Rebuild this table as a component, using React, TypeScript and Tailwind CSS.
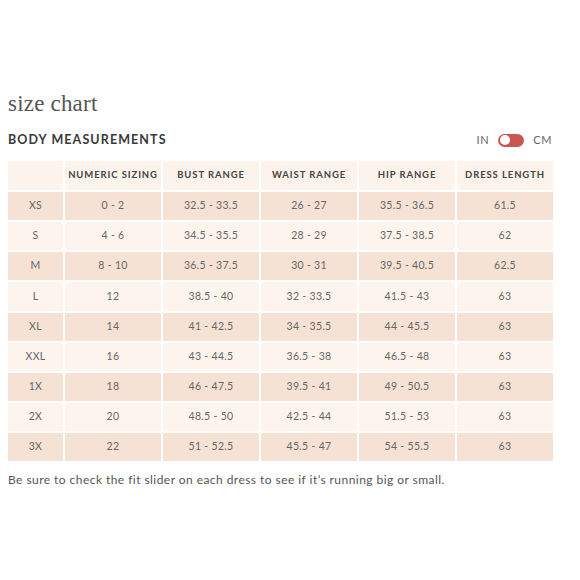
const headers = ['', 'NUMERIC SIZING', 'BUST RANGE', 'WAIST RANGE', 'HIP RANGE', 'DRESS LENGTH'];

const rows = [
  ['XS', '0 - 2', '32.5 - 33.5', '26 - 27', '35.5 - 36.5', '61.5'],
  ['S', '4 - 6', '34.5 - 35.5', '28 - 29', '37.5 - 38.5', '62'],
  ['M', '8 - 10', '36.5 - 37.5', '30 - 31', '39.5 - 40.5', '62.5'],
  ['L', '12', '38.5 - 40', '32 - 33.5', '41.5 - 43', '63'],
  ['XL', '14', '41 - 42.5', '34 - 35.5', '44 - 45.5', '63'],
  ['XXL', '16', '43 - 44.5', '36.5 - 38', '46.5 - 48', '63'],
  ['1X', '18', '46 - 47.5', '39.5 - 41', '49 - 50.5', '63'],
  ['2X', '20', '48.5 - 50', '42.5 - 44', '51.5 - 53', '63'],
  ['3X', '22', '51 - 52.5', '45.5 - 47', '54 - 55.5', '63'],
];

export default function App() {
  return (
    <div className="w-[580px] h-[580px] bg-white px-2 pt-[90px] font-['Lato',sans-serif] text-[#555]">
      <h1 className="font-['Liberation_Serif',serif] text-[23px] leading-[28px] text-[#555] tracking-[0.2px]">
        size chart
      </h1>

      {/* section header + unit toggle */}
      <div className="mt-[13px] flex w-[544px] items-center justify-between">
        <h2 className="text-[12.5px] font-bold tracking-[1.1px] text-[#3a3a3a]">BODY MEASUREMENTS</h2>
        <div className="flex items-center gap-[9px] text-[11px] tracking-[0.6px] text-[#666]">
          <span>IN</span>
          <div className="flex h-[13px] w-[26px] items-center rounded-full bg-[#c9574f] px-[2px]">
            <div className="h-[10px] w-[10px] rounded-full bg-white" />
          </div>
          <span>CM</span>
        </div>
      </div>

      <div className="mt-[11px] grid w-[545px] grid-cols-[55px_repeat(5,96px)] gap-[2px]">
        {headers.map((h, i) => (
          <div
            key={i}
            className="flex h-[29px] items-center justify-center bg-[#fcf3ec] text-[9.5px] font-bold tracking-[0.9px] text-[#444]"
          >
            {h}
          </div>
        ))}
        {rows.map((row, r) =>
          row.map((cell, c) => (
            <div
              key={r + '-' + c}
              className={`flex h-[28.2px] items-center justify-center text-[10.5px] tracking-[0.3px] text-[#666] ${
                r % 2 === 0 ? 'bg-[#f6e2d4]' : 'bg-[#fdf4ee]'
              }`}
            >
              {cell}
            </div>
          ))
        )}
      </div>

      <p className="mt-[10px] text-[12px] tracking-[0.45px] text-[#555]">
        Be sure to check the fit slider on each dress to see if it’s running big or small.
      </p>
    </div>
  );
}
